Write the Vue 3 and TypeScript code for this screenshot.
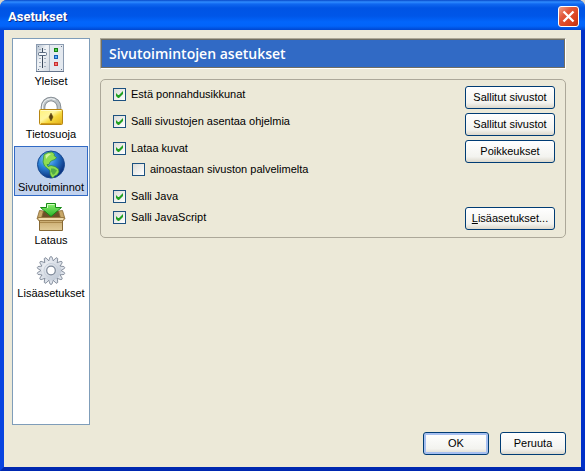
<script setup lang="ts">
import { ref } from 'vue'

type IconName = 'sliders' | 'lock' | 'globe' | 'box' | 'gear'

interface Section {
  label: string
  icon: IconName
}

interface Option {
  id: string
  label: string
  checked: boolean
  kind?: 'nested' | 'tight'
}

const sections: Section[] = [
  { label: 'Yleiset', icon: 'sliders' },
  { label: 'Tietosuoja', icon: 'lock' },
  { label: 'Sivutoiminnot', icon: 'globe' },
  { label: 'Lataus', icon: 'box' },
  { label: 'Lisäasetukset', icon: 'gear' },
]

const current = ref('Sivutoiminnot')

const options = ref<Option[]>([
  { id: 'popups', label: 'Estä ponnahdusikkunat', checked: true },
  { id: 'install', label: 'Salli sivustojen asentaa ohjelmia', checked: true },
  { id: 'images', label: 'Lataa kuvat', checked: true },
  { id: 'origin', label: 'ainoastaan sivuston palvelimelta', checked: false, kind: 'nested' },
  { id: 'java', label: 'Salli Java', checked: true },
  { id: 'javascript', label: 'Salli JavaScript', checked: true, kind: 'tight' },
])

const teeth = Array.from({ length: 14 }, (_, i) => (i * 360) / 14)
</script>

<template>
  <div class="window">
    <header class="titlebar">
      <h1 class="title">Asetukset</h1>
      <button class="close" type="button" aria-label="Sulje">
        <svg viewBox="0 0 19 19" width="19" height="19">
          <path d="M4.500 4.500l10 10M14.500 4.500l-10 10" stroke="#fff" stroke-width="2.300" />
        </svg>
      </button>
    </header>

    <div class="body">
      <div class="content">
        <nav class="sidebar">
          <button
            v-for="s in sections"
            :key="s.label"
            type="button"
            class="section"
            :class="{ active: s.label === current }"
            @click="current = s.label"
          >
            <svg v-if="s.icon === 'sliders'" class="icon" viewBox="0 0 30 30">
              <defs>
                <linearGradient id="panel" x1="0" y1="0" x2="1" y2="1">
                  <stop offset="0" stop-color="#b4c1cf" />
                  <stop offset=".4" stop-color="#f1f4f7" />
                  <stop offset="1" stop-color="#d0d7e0" />
                </linearGradient>
              </defs>
              <rect x=".5" y="1.500" width="27" height="27" fill="#e4e9ef" stroke="#8b9bb0" />
              <rect x="1" y="2" width="13" height="26" fill="url(#panel)" />
              <path d="M13.500 2v26" stroke="#a9b5c3" />
              <path d="M0 28.500h28" stroke="#64738a" />
              <path d="M6.500 5v20" stroke="#3d4b5d" />
              <path d="M3 6.500h2M8 6.500h2M3 15.500h2M8 15.500h2M3 19.500h2M8 19.500h2M3 23.500h2M8 23.500h2" stroke="#a3afbf" />
              <rect x="2.500" y="9.500" width="8" height="3" rx="1" fill="#f5f8fb" stroke="#596a80" />
              <rect x="18.500" y="5.500" width="3" height="3" fill="#52cf52" stroke="#128012" />
              <rect x="18.500" y="12.500" width="3" height="3" fill="#59b0f4" stroke="#175cb4" />
              <rect x="18.500" y="19.500" width="3" height="3" fill="#f87474" stroke="#c63030" />
              <path d="M2.500 3v1M25.500 3v1M2.500 26v1M25.500 26v1" stroke="#66748a" />
            </svg>

            <svg v-else-if="s.icon === 'lock'" class="icon" viewBox="0 0 30 30">
              <defs>
                <linearGradient id="brass" x1="0" y1="0" x2="1" y2="1">
                  <stop offset="0" stop-color="#fff27a" />
                  <stop offset=".4" stop-color="#fff6a0" />
                  <stop offset=".6" stop-color="#f6d83c" />
                  <stop offset="1" stop-color="#e0ac18" />
                </linearGradient>
              </defs>
              <path d="M7 14v-3a8 8 0 0 1 16 0V14" fill="none" stroke="#7c848b" stroke-width="4.600" />
              <path d="M7 14v-3a8 8 0 0 1 16 0V14" fill="none" stroke="#bcc3c8" stroke-width="3" />
              <path d="M6.500 13v-2a8.500 8.500 0 0 1 13-7" fill="none" stroke="#f4f6f7" stroke-width="1" />
              <rect x="3.500" y="13.500" width="23" height="15" rx="1" fill="url(#brass)" stroke="#b78612" />
              <path d="M5 14.500h20" stroke="#fffbc8" />
              <path d="M5 27.500h20" stroke="#d59f18" />
              <path d="M15 17l1 2 1 2-1 2-1 2-1-2-1-2 1-2z" fill="#5d4410" stroke="#5d4410" stroke-width=".5" />
            </svg>

            <svg v-else-if="s.icon === 'globe'" class="icon" viewBox="0 0 30 30">
              <defs>
                <radialGradient id="ocean" cx=".35" cy=".28" r=".75">
                  <stop offset="0" stop-color="#8fd2f8" />
                  <stop offset=".45" stop-color="#2c84d8" />
                  <stop offset="1" stop-color="#0a2c78" />
                </radialGradient>
              </defs>
              <circle cx="15" cy="15.500" r="13.500" fill="url(#ocean)" stroke="#174890" />
              <path d="M8 5.500l4-2 4-.5 2.500 2-.5 1.500 2.500 2-1.500 2-3 1-2 1.500-1 2.500-2 0 1 2 3-1 4 1 3.500 2.500 .5 3-2 3-2.500 1-1.500 2-1.500-1-1.500-3v-3.500l-2.500-2-3-2.500-1.500-4z" fill="#8fdc50" stroke="#2e8a3a" stroke-width=".7" />
              <path d="M9.500 6l3-1.500 2.500.5-2.500 2-2.500 3z" fill="#d0f4a0" />
              <path d="M15 19.500l3 0 3 2-2 3-2 1.500-2-3.500z" fill="#52ac46" />
            </svg>

            <svg v-else-if="s.icon === 'box'" class="icon" viewBox="0 0 30 30">
              <defs>
                <linearGradient id="card" x1="0" y1="0" x2="0" y2="1">
                  <stop offset="0" stop-color="#c9ab70" />
                  <stop offset="1" stop-color="#e2cc98" />
                </linearGradient>
                <linearGradient id="arrow" x1="0" y1="0" x2="0" y2="1">
                  <stop offset="0" stop-color="#8ef070" />
                  <stop offset="1" stop-color="#28b428" />
                </linearGradient>
              </defs>
              <path d="M4 9h22l2 8H2z" fill="#6c5128" />
              <path d="M3.500 8.500l4 .5-2 7-4.500 1z" fill="#c8a868" stroke="#856530" stroke-width=".8" />
              <path d="M26.500 8.500l-4 .5 2 7 4.500 1z" fill="#c8a868" stroke="#856530" stroke-width=".8" />
              <path d="M3.500 18.500h23v10h-23z" fill="url(#card)" stroke="#866833" />
              <path d="M1.500 15.500h27l-1 3h-25z" fill="#efdcae" stroke="#9a7a42" />
              <path d="M4 20.500h22" stroke="#a9884c" />
              <path d="M10.500 1.500h9v4h6L15 14.500 4.500 5.500h6z" fill="url(#arrow)" stroke="#168a16" />
              <path d="M11.500 6V2.500h7" fill="none" stroke="#d1ffc0" />
            </svg>

            <svg v-else class="icon" viewBox="0 0 30 30">
              <defs>
                <linearGradient id="steel" x1="0" y1="0" x2="1" y2="1">
                  <stop offset="0" stop-color="#f4f6f9" />
                  <stop offset="1" stop-color="#b9c3d1" />
                </linearGradient>
              </defs>
              <path
                v-for="a in teeth"
                :key="a"
                d="M12.500 6.500l1.500-4.500q1-1 2 0l1.500 4.500z"
                fill="#dde2ea"
                stroke="#7b8594"
                stroke-width=".8"
                :transform="`rotate(${a} 15 15.500)`"
              />
              <circle cx="15" cy="15.500" r="10" fill="url(#steel)" />
              <circle cx="15" cy="15.500" r="7" fill="none" stroke="#c9d1dc" />
              <circle cx="15" cy="15.500" r="4.300" fill="#fff" stroke="#7d8898" stroke-width="1.200" />
            </svg>
            <span>{{ s.label }}</span>
          </button>
        </nav>

        <main class="main">
          <h2 class="banner">Sivutoimintojen asetukset</h2>
          <section class="group">
            <div class="options">
              <label v-for="o in options" :key="o.id" class="option" :class="o.kind">
                <input v-model="o.checked" type="checkbox" class="check" />
                <span>{{ o.label }}</span>
              </label>
            </div>
            <div class="actions">
              <button class="btn" type="button">Sallitut sivustot</button>
              <button class="btn" type="button">Sallitut sivustot</button>
              <button class="btn" type="button">Poikkeukset</button>
              <button class="btn last" type="button"><u>L</u>isäasetukset...</button>
            </div>
          </section>
        </main>
      </div>

      <footer class="footer">
        <button class="btn default" type="button">OK</button>
        <button class="btn" type="button">Peruuta</button>
      </footer>
    </div>
  </div>
</template>

<style>
body {
  background: #d8d4c8;
}
</style>

<style scoped>
.window {
  box-sizing: border-box;
  min-height: 100vh;
  display: flex;
  flex-direction: column;
  overflow: hidden;
  border-radius: 7px 7px 0 0;
  background: #0540d8;
  font-family: "Liberation Sans", Arial, sans-serif;
  font-size: 11px;
  line-height: 15px;
  color: #000;
}

button {
  font: inherit;
  color: inherit;
  cursor: default;
}

.titlebar {
  box-sizing: border-box;
  height: 30px;
  display: flex;
  align-items: center;
  justify-content: space-between;
  padding: 3px 6px 0 8px;
  background: linear-gradient(#0848c8 0, #2f8cff 2px, #1068f0 4px, #0054e4 8px, #0056e8 16px, #0266fc 22px, #0264fa 26px, #0046d0 30px);
}

.title {
  margin: 0;
  font: bold 13px/16px Roboto, sans-serif;
  color: #fff;
  text-shadow: 1px 1px 0 #0a2a8c;
}

.close {
  width: 21px;
  height: 21px;
  padding: 0;
  border: 1px solid #fff;
  border-radius: 3px;
  overflow: hidden;
  display: grid;
  place-items: center;
  background: linear-gradient(135deg, #f0a088 0, #e2583a 35%, #d8401c 75%, #b83010 100%);
}

.body {
  flex: 1;
  display: flex;
  flex-direction: column;
  padding: 8px 15px 12px 8px;
  border: solid;
  border-width: 0 4px 4px;
  border-color: #0540d8 #0030c8 #0028b0 #0844e0;
  background: #ece9d8;
}

.content {
  flex: 1;
  display: flex;
  gap: 10px;
}

.sidebar {
  box-sizing: border-box;
  width: 78px;
  display: flex;
  flex-direction: column;
  gap: 3px;
  padding: 1px;
  border: 1px solid #7f9db9;
  background: #fff;
}

.section {
  box-sizing: border-box;
  height: 50px;
  padding: 2px 0 0;
  display: flex;
  flex-direction: column;
  align-items: center;
  gap: 1px;
  border: 1px solid transparent;
  background: none;
  white-space: nowrap;
}

.section.active {
  border-color: #316ac5;
  background: #c1d2ee;
}

.icon {
  width: 30px;
  height: 30px;
  flex: none;
}

.main {
  flex: 1;
  display: flex;
  flex-direction: column;
  gap: 10px;
}

.banner {
  margin: 0;
  padding: 4px 8px;
  border: 1px solid;
  border-color: #aca899 #fff #fff #aca899;
  box-shadow: inset 1px 1px 0 #716f64, inset -1px -1px 0 #716f64;
  background: #316ac5;
  color: #fff;
  font: 600 14px/21px "Open Sans", "Noto Sans", sans-serif;
}

.group {
  display: flex;
  justify-content: space-between;
  padding: 6px 10px 7px 12px;
  border: 1px solid #aca899;
  border-radius: 5px;
}

.options {
  display: flex;
  flex-direction: column;
}

.option {
  height: 21px;
  display: flex;
  align-items: center;
  gap: 5px;
  margin-bottom: 6px;
}

.option:first-child {
  margin-top: -2px;
}

.option.nested {
  margin-top: -6px;
  margin-left: 19px;
}

.option.tight {
  margin-top: -6px;
  margin-bottom: 2px;
}

.check {
  appearance: none;
  box-sizing: border-box;
  width: 13px;
  height: 13px;
  margin: 0;
  display: grid;
  place-items: center;
  border: 1px solid #1c5180;
  background: linear-gradient(135deg, #dcdcd7, #fff);
}

.check:checked::before {
  content: "";
  width: 7px;
  height: 7px;
  background: #21a121;
  clip-path: polygon(0 2px, 2px 4px, 3px 4px, 7px 0, 7px 3px, 3px 7px, 2px 7px, 0 5px);
}

.actions {
  width: 90px;
  display: flex;
  flex-direction: column;
  gap: 4px;
}

.btn {
  box-sizing: border-box;
  height: 23px;
  padding: 0;
  border: 1px solid #003c74;
  border-radius: 3px;
  background: linear-gradient(#fff, #f3f3ef 75%, #dcd8cc);
  white-space: nowrap;
}

.btn.last {
  margin-top: auto;
}

.btn.default {
  box-shadow: inset 0 0 0 2px #a6bff0;
}

.footer {
  display: flex;
  justify-content: flex-end;
  gap: 11px;
  padding-top: 7px;
}

.footer .btn {
  width: 66px;
}
</style>
